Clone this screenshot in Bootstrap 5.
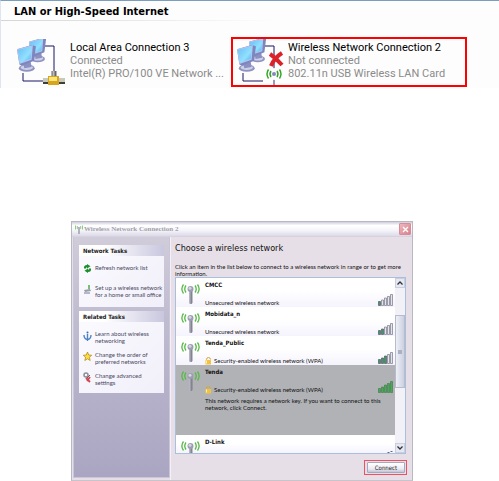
<!DOCTYPE html>
<html lang="en">
<head>
<meta charset="utf-8">
<meta name="viewport" content="width=device-width, initial-scale=1">
<title>Network Connections</title>
<link rel="stylesheet" href="https://cdn.jsdelivr.net/npm/bootstrap@5.3.0/dist/css/bootstrap.min.css">
<style>
body{font-family:Roboto,sans-serif;font-size:11px;line-height:13px;color:#000;background:#fff}
h1,h2,h3,p,ul{margin:0;padding:0;font-size:inherit;line-height:inherit}
a{color:inherit;text-decoration:none}
.lan{border-top:1px solid #7b9ebd;border-left:1px solid #dfe4f0;background:#fdfdfd;height:88px}
.lan-title{font-family:"DejaVu Sans Condensed","DejaVu Sans",sans-serif;font-size:11px;font-weight:700;line-height:17px;padding:2px 0 0 13px}
.lan-rule{height:1px;background:linear-gradient(90deg,#d5d5d5,#fdfdfd 55%)}
.conns{padding:16px 32px 0 13px}
.conn{height:50px;border:2px solid transparent}
.conn-a{flex:0 0 217px;min-width:0}
.conn-b{flex:1 1 0;min-width:0;border-color:#f00}
.conn-a svg{margin-right:4px}
.conn-b svg{margin-right:2px}
.conn svg{flex:none}
.conn-text{white-space:nowrap;padding-top:2px}
.quiet{color:#8b8b8b}
.dialog{margin:133px 86px 0 71px;background:#e6dfe7;border:1px solid #b9b7c2;border-bottom-color:#c8c4cc;font-family:Lato,sans-serif;font-size:6px;line-height:7px;color:#111}
.dialog-title{height:15px;padding:0 1px 0 2px;background:linear-gradient(#cfcdde,#fff 25%,#f5f4fa 60%,#dcdae8);border-bottom:1px solid #d6d2de;font:700 7px/14px "Liberation Serif",serif;color:#a3a1a8}
.close-x{width:12px;height:12px;border:1px solid #d78c98;border-radius:1px;padding:0;background:linear-gradient(135deg,#efb7bd,#d8808c);line-height:0}
.side{flex:0 0 97px;min-width:0;margin:0 0 2px 1px;padding:8px 5px 0 5px;background:linear-gradient(#d0ccd9,#b9b5cc 50%,#aaa6c2);border:1px solid #c9c5da;border-top:0}
.box{background:linear-gradient(135deg,#fbfbff,#f1eff9);margin-bottom:4px}
.box h3,.net-name{font-family:"DejaVu Sans Condensed","DejaVu Sans",sans-serif}
.box h3{font-weight:700;line-height:11px;padding-left:4px;background:linear-gradient(90deg,#fff 30%,#c9c7df);color:#222}
.box a{color:#4a485e;display:flex;gap:3px;padding-left:4px;white-space:nowrap}
.box a svg{flex:none}
.tasks{display:flex;flex-direction:column;gap:11px;padding:8px 0 9px}
.tasks-b{gap:7px;padding:8px 0 7px}
.main{flex:1 1 0;min-width:0;padding:6px 5px 5px 4px;border-left:1px solid #f4f0f6}
.main h2{font:500 9px/11px "DejaVu Sans Condensed","DejaVu Sans",sans-serif;color:#111}
.lead-in{padding-top:9px;white-space:nowrap}
.nets{border:1px solid #a9bfdc;background:#fff;margin-right:1px}
.net-list{flex:1 1 0;min-width:0}
.net{height:29px;padding:0 2px 0 5px;background:linear-gradient(#fff 45%,#f5f3fd)}
.net svg{flex:none}
.net-name{font-weight:700;line-height:13px;color:#111}
.net-state{padding-top:8px;display:flex;gap:2px;white-space:nowrap}
.net.net-on{height:70px;background:#b0b2b5;color:#111}
.net.net-last{height:18px;overflow:hidden}
.net-body{flex:1 1 0;min-width:0;padding-left:5px}
.hint{padding-top:3px;white-space:nowrap}
.bars{margin-top:16px}
.scroll{flex:0 0 10px;background:#f3f1f8}
.scroll button{height:10px;padding:0;border:1px solid #cbcedd;background:#e5e7f2;line-height:0;text-align:center}
.scroll button svg{display:block;margin:auto}
.thumb{height:73px;margin-top:27px;background:linear-gradient(90deg,#eef0f7,#ccd0df);border:1px solid #b6bccb;display:flex;align-items:center;justify-content:center}
.thumb i{width:4px;height:4px;background:#aab1c4}
.mark-red{border:1px solid #ee5060;padding:1px 1px 1px 2px;margin-top:6px}
.go{width:38px;height:11px;border:1px solid #a4a9be;border-radius:1px;background:linear-gradient(#fff,#eceaf2 65%,#c5c3d5);font-family:"DejaVu Sans Condensed","DejaVu Sans",sans-serif;font-size:6px;line-height:7px;padding:0;color:#222}
</style>
<script src="https://cdn.jsdelivr.net/npm/bootstrap@5.3.0/dist/js/bootstrap.bundle.min.js"></script>
</head>
<body>
<svg width="0" height="0" class="position-absolute" aria-hidden="true">
<defs>
<linearGradient id="scr" x1="0" y1="0" x2="1" y2="1"><stop offset="0" stop-color="#62bdf6"/><stop offset=".6" stop-color="#93e0ff"/><stop offset="1" stop-color="#4aa9ee"/></linearGradient>
<linearGradient id="rod"><stop offset="0" stop-color="#c3c3d0"/><stop offset="1" stop-color="#6c6c7c"/></linearGradient>
<g id="pc"><ellipse cx="8" cy="19" rx="6.500" ry="3" fill="#8f93c0"/><ellipse cx="8" cy="18.500" rx="5" ry="2" fill="#cdd0ea"/><path d="M5 14l6-1 1 5-6 1z" fill="#8c90c0"/><path d="M0 3.500L12 0l3.500 1L14 13 4 17l-2-1z" fill="#7d86bf"/><path d="M0 3.500L13 0l-1 12L2 15.500z" fill="#b4c6ee"/><path d="M.8 4.200L12.200 1l-.9 10.300L2.500 14.600z" fill="url(#scr)"/></g>
<g id="pcs"><path d="M27 7h11v26M7 34v8h20" fill="none" stroke="#1b1464"/><use href="#pc" transform="translate(13 -1) scale(1.100)"/><use href="#pc" transform="translate(1 6) scale(1.220)"/></g>
<g id="ant"><path d="M5 3.500Q2.500 7 5 10.500M2.500 2.500Q-.8 7 2.500 11.500M14 3.500Q16.500 7 14 10.500M16.500 2.500Q19.800 7 16.500 11.500" fill="none" stroke="#58b948" stroke-width="1.300"/><rect x="8" y="8" width="3.400" height="14" rx="1.500" fill="url(#rod)"/><circle cx="9.500" cy="7" r="3" fill="#9d9db2"/><circle cx="9" cy="6.300" r="1.500" fill="#d5d5e4"/></g>
<g id="lock"><path d="M1.500 4V2.500a2 2 0 0 1 4 0" fill="none" stroke="#d9a92c"/><rect x=".5" y="3" width="5.500" height="4.500" fill="#f2c343"/><path d="M1.500 3.500v3" stroke="#fff0b0"/></g>
</defs></svg>

<section class="lan">
<h1 class="lan-title">LAN or High-Speed Internet</h1>
<div class="lan-rule"></div>
<div class="conns d-flex">
<div class="conn conn-a d-flex">
<svg width="50" height="48" viewBox="0 0 50 48"><use href="#pcs"/><path d="M38 32v7" stroke="#666" stroke-width="5"/><path d="M37.500 32v7" stroke="#bbb" stroke-width="2"/><path d="M27 39h22v6H27z" fill="#3f3f38"/><path d="M27 39h22v4H27z" fill="#c9c9b8"/><path d="M32 37h11v9H32z" fill="#d8a51c"/><path d="M33 38h8v4h-8z" fill="#ffe57a"/></svg>
<div class="conn-text"><div>Local Area Connection 3</div><div class="quiet">Connected</div><div class="quiet">Intel(R) PRO/100 VE Network ...</div></div>
</div>
<div class="conn conn-b d-flex">
<svg width="53" height="46" viewBox="0 0 53 46"><use href="#pcs" x="3" y="0"/><path d="M37 15q6 4 12 11M49 14q-8 5-11 13" fill="none" stroke="#d9222a" stroke-width="4"/><path d="M41 38v8" stroke="#7777a4" stroke-width="1.500"/><circle cx="41" cy="35" r="6" fill="#fdfdfd"/><circle cx="41" cy="35" r="2" fill="#8a86bb"/><path d="M38 32q-2 3 0 6M35.500 30.500q-3 4.500 0 9M44 32q2 3 0 6M46.500 30.500q3 4.500 0 9" fill="none" stroke="#2aa51f" stroke-width="1.400"/></svg>
<div class="conn-text"><div>Wireless Network Connection 2</div><div class="quiet">Not connected</div><div class="quiet">802.11n USB Wireless LAN Card</div></div>
</div>
</div>
</section>

<section class="dialog">
<div class="dialog-title d-flex align-items-center">
<svg width="10" height="11" viewBox="0 0 10 11"><path d="M1.500 1.500v4M3.300 2v3M6.700 2v3M8.500 1.500v4" stroke="#8ccc80"/><path d="M5 3v7" stroke="#9c9cac" stroke-width="1.500"/></svg>
<span class="flex-grow-1">Wireless Network Connection 2</span>
<button class="close-x" type="button" aria-label="Close"><svg width="7" height="7" viewBox="0 0 7 7"><path d="M1 1l5 5M6 1L1 6" stroke="#fff" stroke-width="1.300"/></svg></button>
</div>
<div class="d-flex">
<aside class="side">
<div class="box"><h3>Network Tasks</h3>
<div class="tasks">
<a href="#"><svg width="9" height="9" viewBox="0 0 9 9"><path d="M1 4.500Q.5 1 4 1L4 0 7.500 2.300 4 4.500V3.300Q3 3.300 3 4.500zM8 4.500Q8.500 8 5 8v1L1.500 6.700 5 4.500v1.200Q6 5.700 6 4.500z" fill="#1d8f2a"/></svg><span>Refresh network list</span></a>
<a href="#"><svg width="9" height="10" viewBox="0 0 9 10"><path d="M1 6l6-1 1 2-6 1z" fill="#9b9cab"/><path d="M1 9h6" stroke="#77798d"/><path d="M6 1v4" stroke="#4aac4a" stroke-width="1.500"/></svg><span>Set up a wireless network<br>for a home or small office</span></a>
</div></div>
<div class="box"><h3>Related Tasks</h3>
<div class="tasks tasks-b">
<a href="#"><svg width="9" height="14" viewBox="0 0 9 14"><path d="M1 5q0 4 3.500 4.500Q8 9 8 5M4.500 4v7" fill="none" stroke="#4e83c4" stroke-width="1.400"/><circle cx="4.500" cy="2.500" r="1" fill="#396db4"/></svg><span>Learn about wireless<br>networking</span></a>
<a href="#"><svg width="9" height="14" viewBox="0 0 9 14"><path d="M4.500 1l1.200 3 3 .3-2.300 2 .8 3.200-2.700-1.700L1.800 9.500l.8-3.200-2.300-2 3-.3z" fill="#ffdb3b" stroke="#a98413" stroke-width=".7"/></svg><span>Change the order of<br>preferred networks</span></a>
<a href="#"><svg width="9" height="14" viewBox="0 0 9 14"><circle cx="3" cy="3" r="2" fill="none" stroke="#8d8d98" stroke-width="1.500"/><path d="M4 6l3-3" stroke="#666"/><path d="M3 6l4 4M7 5L4 9" stroke="#cf4550" stroke-width="1.800"/></svg><span>Change advanced<br>settings</span></a>
</div></div>
</aside>
<main class="main">
<h2>Choose a wireless network</h2>
<p class="lead-in">Click an item in the list below to connect to a wireless network in range or to get more<br>information.</p>
<div class="nets d-flex">
<div class="net-list">
<div class="net d-flex"><svg width="19" height="26" viewBox="0 -4 19 26"><use href="#ant"/></svg><div class="net-body"><div class="net-name">CMCC</div><div class="net-state">Unsecured wireless network</div></div><svg class="bars" width="15" height="12" viewBox="0 0 15 12"><path d="M.5 7.500h2v4h-2z" fill="#3aa04a" stroke="#557" stroke-width=".7"/><path d="M3.500 6h2v5.500h-2zM6.500 4h2v7.500h-2zM9.500 2.500h2v9h-2zM12.500.5h2v11h-2z" fill="#e3e3ea" stroke="#777789" stroke-width=".7"/></svg></div>
<div class="net d-flex"><svg width="19" height="26" viewBox="0 -4 19 26"><use href="#ant"/></svg><div class="net-body"><div class="net-name">Mobidata_n</div><div class="net-state">Unsecured wireless network</div></div><svg class="bars" width="15" height="12" viewBox="0 0 15 12"><path d="M.5 7.500h2v4h-2zM3.500 6h2v5.500h-2z" fill="#3aa04a" stroke="#557" stroke-width=".7"/><path d="M6.500 4h2v7.500h-2zM9.500 2.500h2v9h-2zM12.500.5h2v11h-2z" fill="#e3e3ea" stroke="#777789" stroke-width=".7"/></svg></div>
<div class="net d-flex"><svg width="19" height="26" viewBox="0 -4 19 26"><use href="#ant"/></svg><div class="net-body"><div class="net-name">Tenda_Public</div><div class="net-state"><svg width="7" height="8"><use href="#lock"/></svg>Security-enabled wireless network (WPA)</div></div><svg class="bars" width="15" height="12" viewBox="0 0 15 12"><path d="M.5 7.500h2v4h-2zM3.500 6h2v5.500h-2zM6.500 4h2v7.500h-2z" fill="#3aa04a" stroke="#557" stroke-width=".7"/><path d="M9.500 2.500h2v9h-2zM12.500.5h2v11h-2z" fill="#e3e3ea" stroke="#777789" stroke-width=".7"/></svg></div>
<div class="net net-on d-flex"><svg width="19" height="26" viewBox="0 -4 19 26"><use href="#ant"/></svg><div class="net-body"><div class="net-name">Tenda</div><div class="net-state"><svg width="7" height="8"><use href="#lock"/></svg>Security-enabled wireless network (WPA)</div><div class="hint">This network requires a network key. If you want to connect to this<br>network, click Connect.</div></div><svg class="bars" width="15" height="12" viewBox="0 0 15 12"><path d="M.5 7.500h2v4h-2zM3.500 6h2v5.500h-2zM6.500 4h2v7.500h-2zM9.500 2.500h2v9h-2zM12.500.5h2v11h-2z" fill="#3fae4c" stroke="#4c7a58" stroke-width=".7"/></svg></div>
<div class="net net-last d-flex"><svg width="19" height="26" viewBox="0 -4 19 26"><use href="#ant"/></svg><div class="net-body"><div class="net-name">D-Link</div></div><svg class="bars" width="15" height="12" viewBox="0 0 15 12"><path d="M9.500 1.500h2M12.500.5h2" stroke="#667"/></svg></div>
</div>
<div class="scroll d-flex flex-column">
<button type="button" aria-label="Scroll up"><svg width="6" height="4" viewBox="0 0 6 4"><path d="M.5 3.500L3 1l2.500 2.500" fill="none" stroke="#333" stroke-width="1.300"/></svg></button>
<div class="thumb"><i></i></div>
<button class="mt-auto" type="button" aria-label="Scroll down"><svg width="6" height="4" viewBox="0 0 6 4"><path d="M.5.5L3 3 5.500.5" fill="none" stroke="#333" stroke-width="1.300"/></svg></button>
</div>
</div>
<div class="d-flex justify-content-end"><div class="mark-red d-flex"><button class="go" type="button">Connect</button></div></div>
</main>
</div>
</section>
</body>
</html>
